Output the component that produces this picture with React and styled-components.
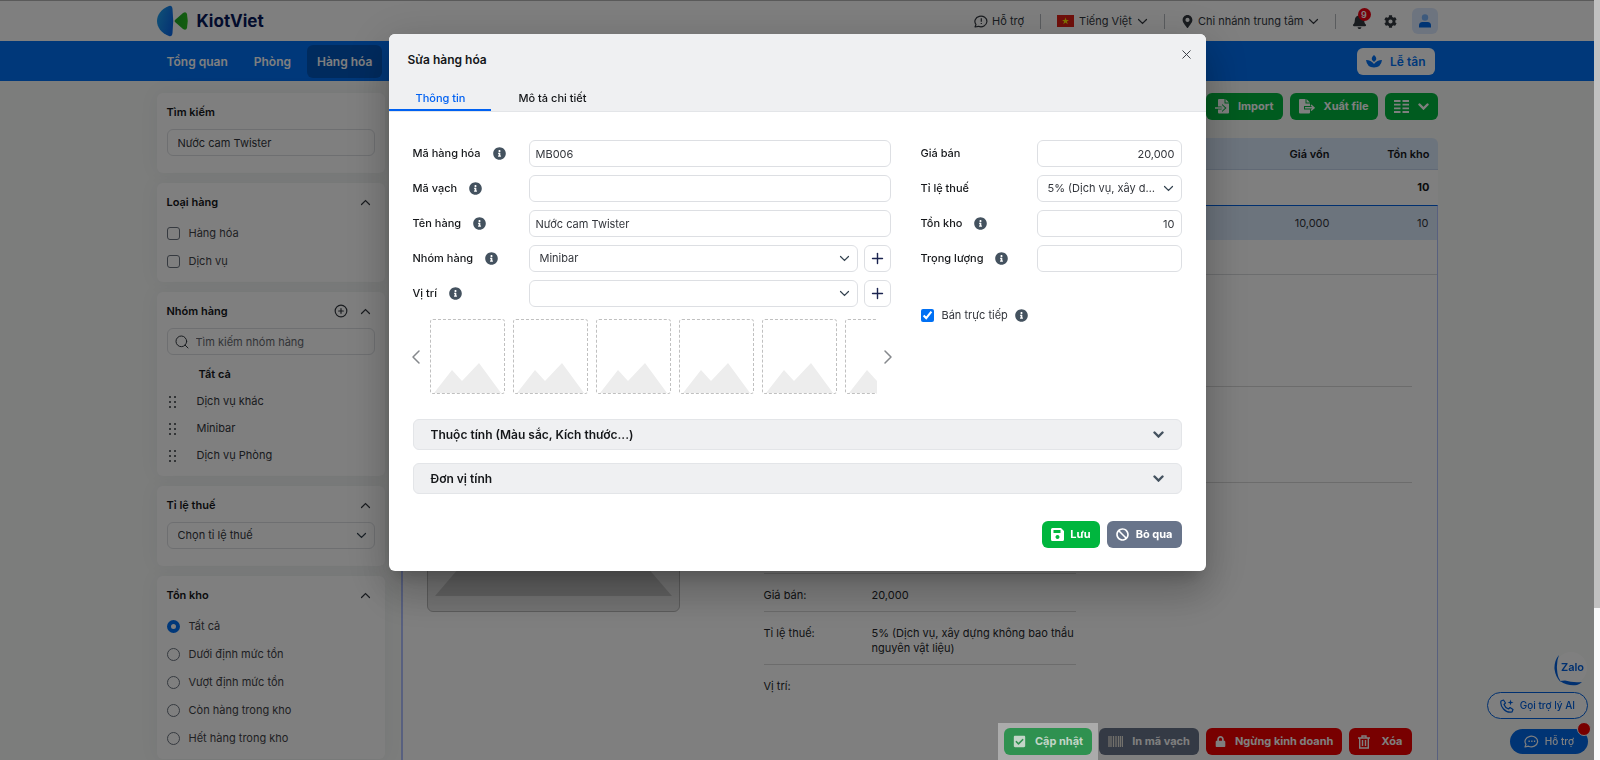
import React from "react";
import styled, { createGlobalStyle, css } from "styled-components";
import {
  FaInfoCircle,
  FaBell,
  FaCog,
  FaMapMarkerAlt,
  FaLock,
  FaBan,
  FaCheckSquare,
} from "react-icons/fa";
import { FiPlus, FiX, FiSearch, FiPlusCircle, FiChevronLeft, FiChevronRight } from "react-icons/fi";

const GlobalStyle = createGlobalStyle`
  * { box-sizing: border-box; }
  body {
    margin: 0;
    font-family: Inter, "Liberation Sans", sans-serif;
    font-size: 11px;
    line-height: 15px;
    color: #15171a;
    background: #f8faf8;
  }
  button, input, select { font: inherit; color: inherit; margin: 0; }
  button { cursor: pointer; }
  a { color: inherit; text-decoration: none; }
  h1, h2, h3, p, ul, dl, dd { margin: 0; padding: 0; font-size: inherit; }
`;

/* ---------- page frame ---------- */

const Page = styled.div`
  height: 100vh;
  overflow: hidden;
  padding-right: 6px;
  display: flex;
  flex-direction: column;
`;

const Container = styled.div`
  width: 100%;
  max-width: 1281px;
  margin: 0 auto;
  display: flex;
  align-items: center;
`;

const TopBar = styled.header`
  border-top: 1px solid #b4b4b4;
  background: #fff;
  height: 41px;
  display: flex;
`;

const Brand = styled.a`
  display: flex;
  align-items: center;
  gap: 8px;
  font-size: 17px;
  line-height: 24px;
  font-weight: 700;
  color: #06195a;
  margin-right: auto;
`;

const TopLink = styled.button`
  display: flex;
  align-items: center;
  gap: ${(p) => p.$gap || 5}px;
  border: 0;
  background: none;
  padding: 0;
  color: #33383f;
`;

const Divider = styled.span`
  width: 1px;
  height: 15px;
  background: #b4b8bd;
  margin: 0 16px;
`;

const BellButton = styled.button`
  position: relative;
  border: 0;
  background: none;
  padding: 0;
  display: flex;
  color: #33383f;
  margin-right: 17px;
`;

const Badge = styled.span`
  position: absolute;
  left: 6px;
  top: -6px;
  width: 13px;
  height: 13px;
  border-radius: 50%;
  background: #f00010;
  color: #fff;
  font-size: 9px;
  line-height: 13px;
  font-weight: 600;
`;

const IconButton = styled.button`
  border: 0;
  background: none;
  padding: 0;
  display: flex;
  color: #33383f;
`;

const Avatar = styled.button`
  margin-left: 15px;
  width: 26px;
  height: 26px;
  border: 0;
  border-radius: 6px;
  background: #dbe8ff;
  display: flex;
  align-items: center;
  justify-content: center;
  padding: 0;
`;

const NavBar = styled.nav`
  background: #0070f4;
  height: 40px;
  display: flex;
`;

const NavLink = styled.a`
  padding: 0 10px;
  height: 33px;
  line-height: 33px;
  margin-right: 6px;
  border-radius: 6px;
  font-size: 12px;
  font-weight: 600;
  color: #fff;
  background: ${(p) => (p.$active ? "#0056bd" : "none")};
`;

const Reception = styled.button`
  margin: 0 3px 0 auto;
  height: 27px;
  padding: 0 9px;
  border: 0;
  border-radius: 6px;
  background: #fff;
  color: #0070f4;
  font-size: 12px;
  font-weight: 600;
  display: flex;
  align-items: center;
  gap: 8px;
`;

const Body = styled.div`
  flex: 1;
  min-height: 0;
  width: 100%;
  max-width: 1281px;
  margin: 0 auto;
  padding-top: 12px;
  display: flex;
  gap: 16px;
`;

/* ---------- sidebar ---------- */

const Sidebar = styled.aside`
  width: 228px;
  flex: none;
  display: flex;
  flex-direction: column;
  gap: 10px;
`;

const Panel = styled.section`
  background: #fff;
  border-radius: 6px;
  box-shadow: 0 0 20px rgba(20, 50, 90, 0.06);
  padding: 10px 10px ${(p) => p.$bottom || 17}px;
  display: flex;
  flex-direction: column;
`;

const PanelHead = styled.div`
  display: flex;
  align-items: center;
  gap: 12px;
  height: 18px;
  margin-bottom: 8px;
  padding-right: 4px;
`;

const PanelTitle = styled.h2`
  flex: 1;
  font-weight: 600;
`;

const fieldCss = css`
  width: 100%;
  height: 27px;
  border: 1px solid #dddfe3;
  border-radius: 6px;
  background: #fff;
  outline: 0;
  color: #33363c;
`;

const Input = styled.input`
  ${fieldCss}
  padding: 0 ${(p) => p.$pad || 6}px;
  text-align: ${(p) => p.$align || "left"};
`;

const SearchBox = styled.div`
  position: relative;
  display: flex;
  align-items: center;
  svg { position: absolute; left: 7px; color: #33383f; }
  input { padding-left: 28px; }
  input::placeholder { color: #666a70; opacity: 1; }
`;

const SelectWrap = styled.div`
  position: relative;
  flex: 1;
  min-width: 0;
  display: flex;
  align-items: center;
  svg { position: absolute; right: 8px; pointer-events: none; color: #33424f; }
`;

const SelectField = styled.select`
  ${fieldCss}
  appearance: none;
  padding: 0 20px 0 10px;
  overflow: hidden;
  text-overflow: ellipsis;
  white-space: nowrap;
`;

const OptionRow = styled.label`
  display: flex;
  align-items: center;
  gap: 9px;
  height: 28px;
  color: #3f4247;
`;

const Check = styled.input`
  appearance: none;
  margin: 0;
  width: 13px;
  height: 13px;
  border: 1px solid #6c7480;
  border-radius: ${(p) => (p.type === "radio" ? "50%" : "3px")};
  background: #fff;
  &[type="radio"]:checked { border: 4px solid #0070f4; }
`;

const GroupRow = styled.li`
  display: flex;
  align-items: center;
  gap: 21px;
  height: 27px;
  padding-left: 2px;
  list-style: none;
  color: #33363c;
`;

const GroupAll = styled.p`
  padding: 12px 0 6px 32px;
  font-weight: 600;
`;

/* ---------- main ---------- */

const Main = styled.main`
  flex: 1;
  min-width: 0;
  display: flex;
  flex-direction: column;
`;

const Toolbar = styled.div`
  display: flex;
  justify-content: flex-end;
  gap: 7px;
  margin-bottom: 18px;
`;

const Button = styled.button`
  height: 27px;
  border: 0;
  border-radius: 6px;
  padding: 0 9px;
  display: flex;
  align-items: center;
  gap: ${(p) => p.$gap || 9}px;
  font-weight: 700;
  font-size: 11px;
  white-space: nowrap;
  color: ${(p) => p.$ink || "#fff"};
  background: ${(p) => p.$bg || "#00b63e"};
`;

const Table = styled.table`
  width: 100%;
  border-collapse: separate;
  border-spacing: 0;
  th, td { padding: 0 8px; text-align: right; }
  th { height: 32px; padding-top: 1px; background: #d9e8fb; font-weight: 600; border-bottom: 1px solid #c2d3ea; }
  th:first-child { border-top-left-radius: 6px; }
  th:last-child { border-top-right-radius: 6px; width: 100px; }
`;

const TotalRow = styled.tr`
  td { height: 35px; background: #fff; font-weight: 700; }
`;

const ItemRow = styled.tr`
  td { height: 35px; background: #d9e8fb; border-top: 1px solid #0061e0; color: #33363c; }
  td:first-child { border-left: 2px solid #b0c0ff; }
  td:last-child { border-right: 1px solid #b0c0ff; }
`;

const Detail = styled.section`
  flex: 1;
  min-height: 0;
  background: #fff;
  border-left: 2px solid #b0c0ff;
  border-right: 1px solid #b0c0ff;
  display: flex;
  flex-direction: column;
`;

const DetailTabs = styled.div`
  height: 35px;
  flex: none;
  border-bottom: 1px solid #d8dadd;
`;

const DetailBody = styled.div`
  flex: 1;
  min-height: 0;
  padding: 83px 25px 0 24px;
  display: grid;
  grid-template-columns: 253px 312px 1fr;
  column-gap: 84px;
  align-items: start;
`;

const Thumb = styled.div`
  height: 254px;
  border: 1px solid #b9b9b9;
  border-radius: 6px;
  background: #e8e8e8;
  padding: 0 7px 15px;
  display: flex;
  align-items: flex-end;
  svg { width: 100%; height: 100px; }
`;

const Facts = styled.dl`
  margin-top: 215px;
  border-top: 1px solid #d8d8d8;
  color: #24262a;
`;

const Fact = styled.div`
  display: flex;
  padding: 14px 0 8px;
  border-bottom: ${(p) => (p.$last ? "0" : "1px solid #d8d8d8")};
  dt { width: 108px; flex: none; }
`;

const Notes = styled.div`
  margin: 28px 0 0 -84px;
  border-top: 1px solid #d8d8d8;
  border-bottom: 1px solid #d8d8d8;
  height: 97px;
`;

const Actions = styled.div`
  flex: none;
  padding-right: 25px;
  display: flex;
  justify-content: flex-end;
  align-items: flex-start;
  gap: 7px;
  > button { margin-top: 5px; }
`;

const Spotlight = styled.div`
  position: relative;
  z-index: 20;
  padding: 5px 6px;
  margin-right: -6px;
  background: #ababab;
`;

/* ---------- floating help ---------- */

const Floating = styled.div`
  position: fixed;
  right: 12px;
  bottom: 6px;
  display: flex;
  flex-direction: column;
  align-items: flex-end;
`;

const Zalo = styled.a`
  width: 34px;
  height: 34px;
  margin-bottom: 6px;
`;

const Pill = styled.button`
  position: relative;
  height: ${(p) => (p.$solid ? 25 : 27)}px;
  border-radius: 14px;
  border: ${(p) => (p.$solid ? "0" : "1px solid #0061e0")};
  background: ${(p) => (p.$solid ? "#0068e8" : "#fff")};
  color: ${(p) => (p.$solid ? "#fff" : "#0061e0")};
  padding: 0 ${(p) => (p.$solid ? 14 : 12)}px;
  margin-top: ${(p) => (p.$solid ? 10 : 0)}px;
  display: flex;
  align-items: center;
  gap: 6px;
  font-size: 10px;
  font-weight: 500;
`;

const Dot = styled.span`
  position: absolute;
  right: -3px;
  top: -7px;
  width: 14px;
  height: 14px;
  border-radius: 50%;
  background: #f00000;
  border: 1px solid #fff;
`;

/* ---------- modal ---------- */

const Overlay = styled.div`
  position: fixed;
  inset: 0 6px 0 0;
  z-index: 10;
  background: rgba(0, 0, 0, 0.5);
  display: flex;
  justify-content: center;
  align-items: flex-start;
  padding-top: 34px;
`;

const ScrollTrack = styled.div`
  position: fixed;
  z-index: 11;
  top: 0;
  right: 0;
  bottom: 0;
  width: 6px;
  background: #f8f9fa;
`;

const ScrollThumb = styled.div`
  height: 80%;
  background: #c1c1c1;
`;

const Dialog = styled.section`
  width: 817px;
  max-width: 100%;
  background: #fff;
  border-radius: 6px;
  overflow: hidden;
  box-shadow: 0 9px 46px 8px rgba(0, 0, 0, 0.12), 0 24px 38px 3px rgba(0, 0, 0, 0.14), 0 11px 15px -7px rgba(0, 0, 0, 0.2);
`;

const DialogHead = styled.header`
  background: #eff0f2;
  border-bottom: 1px solid #e3e5e8;
`;

const TitleRow = styled.div`
  display: flex;
  justify-content: space-between;
  padding: 13px 12px 0 19px;
  height: 50px;
`;

const Title = styled.h1`
  font-size: 12px;
  line-height: 26px;
  font-weight: 600;
`;

const CloseButton = styled.button`
  border: 0;
  background: none;
  padding: 0;
  height: 15px;
  color: #33383f;
  display: flex;
`;

const Tabs = styled.div`
  display: flex;
`;

const Tab = styled.button`
  height: 27px;
  padding: 4px 26px 0 27px;
  border: 0;
  border-bottom: 2px solid ${(p) => (p.$active ? "#0061f2" : "transparent")};
  background: none;
  color: ${(p) => (p.$active ? "#0061f2" : "#15171a")};
  font-size: 11px;
  font-weight: 500;
`;

const Form = styled.form`
  padding: 28px 24px 23px;
`;

const Columns = styled.div`
  display: grid;
  grid-template-columns: minmax(0, 1fr) 261px;
  column-gap: 30px;
`;

const Fields = styled.div`
  min-width: 0;
  display: flex;
  flex-direction: column;
  gap: 8px;
`;

const FieldRow = styled.div`
  display: grid;
  grid-template-columns: 116px minmax(0, 1fr);
  align-items: center;
`;

const FieldLabel = styled.div`
  display: flex;
  align-items: center;
  gap: 12px;
  padding-bottom: 1px;
  font-weight: 500;
  svg { color: #44525f; }
`;

const Inline = styled.div`
  display: flex;
  gap: 6px;
`;

const AddButton = styled.button`
  width: 27px;
  height: 27px;
  flex: none;
  border: 1px solid #dddfe3;
  border-radius: 6px;
  background: #fff;
  color: #1b2450;
  padding: 0;
  display: flex;
  align-items: center;
  justify-content: center;
`;

const Gallery = styled.div`
  display: flex;
  align-items: center;
  margin-top: 4px;
`;

const Arrow = styled.button`
  border: 0;
  background: none;
  padding: 0;
  flex: none;
  width: ${(p) => (p.$end ? 14 : 17)}px;
  display: flex;
  justify-content: ${(p) => (p.$end ? "flex-end" : "flex-start")};
  color: #85888c;
  svg { margin: 0 -9px; flex: none; }
`;

const Strip = styled.div`
  flex: 1;
  min-width: 0;
  overflow: hidden;
  display: flex;
  gap: 8px;
`;

const Slot = styled.div`
  width: 75px;
  height: 75px;
  flex: none;
  border: 1px dashed #c0c0c0;
  border-radius: 3px;
  display: flex;
  align-items: flex-end;
  justify-content: center;
`;

const DirectSale = styled.div`
  display: flex;
  align-items: center;
  gap: 7px;
  margin-top: 22px;
  height: 27px;
  svg { color: #44525f; }
  label { display: flex; align-items: center; gap: 8px; color: #33363c; }
`;

const Tick = styled.input`
  margin: 0;
  width: 13px;
  height: 13px;
  accent-color: #0070f4;
`;

const Accordion = styled.button`
  width: 100%;
  height: 31px;
  margin-top: ${(p) => (p.$first ? 25 : 13)}px;
  padding: 0 17px;
  border: 1px solid #e3e5e8;
  border-radius: 6px;
  background: #eff0f2;
  display: flex;
  align-items: center;
  justify-content: space-between;
  font-size: 12px;
  font-weight: 600;
  svg { color: #44525f; }
`;

const Footer = styled.footer`
  display: flex;
  justify-content: flex-end;
  gap: 7px;
  margin-top: 27px;
`;

/* ---------- drawings ---------- */

const Chevron = ({ up, bold }) => (
  <svg width="11" height="7" viewBox="0 0 11 7" fill="none" stroke="currentColor" strokeWidth={bold ? 2.4 : 1.2}>
    <path d={up ? "M1.500 5.500 L5.500 1.500 L9.500 5.500" : "M1.500 1.500 L5.500 5.500 L9.500 1.500"} strokeLinecap="round" />
  </svg>
);

const LogoMark = () => (
  <svg width="32" height="32" viewBox="0 0 32 32">
    <defs>
      <linearGradient id="kvBlue" x1="0" x2="1" y1="0" y2="0.5">
        <stop offset="0" stopColor="#1fa5ee" />
        <stop offset="1" stopColor="#0c6be8" />
      </linearGradient>
      <linearGradient id="kvGreen" x1="0" x2="1">
        <stop offset="0" stopColor="#1fa82a" />
        <stop offset="1" stopColor="#29bd1f" />
      </linearGradient>
    </defs>
    <path d="M12 1 Q15 0 15.500 4 Q17 16 15.500 28 Q15 32 12 31 C4 28 0 22 0 16 C0 10 4 4 12 1 Z" fill="url(#kvBlue)" />
    <path d="M18 15 L26 8 Q29 6 30 9 Q31.500 16 30 23 Q29 26 26 24 L18 17 Q17 16 18 15 Z" fill="url(#kvGreen)" />
  </svg>
);

const SpeechAlert = () => (
  <svg width="14" height="13" viewBox="0 0 14 13" fill="none" stroke="currentColor" strokeWidth="1.2">
    <path d="M1 12 L2 9.500 A6 5.300 0 1 1 4.500 11.300 Z" strokeLinejoin="round" />
    <path d="M7.300 3.200 V6.700 M7.300 7.900 V9.100" />
  </svg>
);

const Flag = () => (
  <svg width="17" height="12" viewBox="0 0 17 12">
    <rect width="17" height="12" fill="#e22016" />
    <path d="M8.500 2.500 L9.400 5 H12 L9.900 6.600 L10.700 9.200 L8.500 7.600 L6.300 9.200 L7.100 6.600 L5 5 H7.600 Z" fill="#ffe600" />
  </svg>
);

const Person = () => (
  <svg width="12" height="14" viewBox="0 0 12 14">
    <circle cx="6" cy="3.500" r="3.200" fill="#7ab4fb" />
    <path d="M0 13.500 V11.500 Q0 8 3.500 8 H8.500 Q12 8 12 11.500 V13.500 Z" fill="#0068e8" />
  </svg>
);

const Lotus = () => (
  <svg width="16" height="13" viewBox="0 0 16 13" fill="currentColor">
    <path d="M8 0 Q11 2.500 10 5 L8 7 L6 5 Q5 2.500 8 0 Z" />
    <path d="M0 5 Q5 5 8 9 Q11 5 16 5 Q15 12.500 8 12.500 Q1 12.500 0 5 Z" />
  </svg>
);

const FileIn = () => (
  <svg width="14" height="15" viewBox="0 0 14 15">
    <path fillRule="evenodd" d="M4 0 H9.500 V4.500 H14 V13.500 Q14 14.500 13 14.500 H4 Q3 14.500 3 13.500 V10.500 H7 V13 L11.500 9 L7 5 V7.500 H3 V1 Q3 0 4 0 Z M10.500 0 L14 3.500 H10.500 Z" fill="currentColor" />
    <path d="M0 9 H8.500 M6.500 6.500 L9 9 L6.500 11.500" stroke="currentColor" strokeWidth="1.400" fill="none" />
  </svg>
);

const FileOut = () => (
  <svg width="16" height="15" viewBox="0 0 16 15">
    <path d="M1 0 H6.500 V4.500 H11 V7 H5 V10.500 H11 V13.500 Q11 14.500 10 14.500 H1 Q0 14.500 0 13.500 V1 Q0 0 1 0 Z M7.500 0 L11 3.500 H7.500 Z" fill="currentColor" />
    <path d="M6 8.800 H14.500 M12 6 L15 8.800 L12 11.500" stroke="currentColor" strokeWidth="1.500" fill="none" />
  </svg>
);

const ListColumns = () => (
  <svg width="15" height="13" viewBox="0 0 15 13" stroke="currentColor" strokeWidth="1.800">
    <path d="M0 1 H6.500 M8.500 1 H15 M0 4.700 H6.500 M8.500 4.700 H15 M0 8.400 H6.500 M8.500 8.400 H15 M0 12 H6.500 M8.500 12 H15" />
  </svg>
);

const Grip = () => (
  <svg width="7" height="12" viewBox="0 0 7 12" fill="#33383f">
    {[1, 6, 11].map((y) => (
      <g key={y}>
        <circle cx="1" cy={y} r="1" />
        <circle cx="6" cy={y} r="1" />
      </g>
    ))}
  </svg>
);

const Barcode = () => (
  <svg width="15" height="11" viewBox="0 0 15 11" stroke="#e6e2d8">
    <path d="M1 0 V11 M3 0 V11 M5.500 0 V11 M8 0 V11 M10.500 0 V11 M12.500 0 V11 M14.500 0 V11" strokeWidth="1.300" />
  </svg>
);

const Trash = () => (
  <svg width="12" height="14" viewBox="0 0 12 14" fill="none" stroke="currentColor" strokeWidth="1.400">
    <path d="M0 3 H12 M4 3 V1 H8 V3 M1.700 3 V13 H10.300 V3 M4.500 5 V11 M7.500 5 V11" />
  </svg>
);

const Floppy = () => (
  <svg width="13" height="13" viewBox="0 0 13 13">
    <path fillRule="evenodd" fill="#fff" d="M1.500 0 H10 L13 3 V11.500 Q13 13 11.500 13 H1.500 Q0 13 0 11.500 V1.500 Q0 0 1.500 0 Z M2.500 2 V5 H9.500 V2 Z M6.500 7 A2 2 0 1 0 6.501 7 Z" />
  </svg>
);

const Hills = () => (
  <svg width="67" height="30" viewBox="0 0 67 30">
    <path d="M0 30 L18 7 L28 18 L45 0 L67 30 Z" fill="#ededed" />
  </svg>
);

const BigHill = () => (
  <svg viewBox="0 0 236 100" preserveAspectRatio="none">
    <path d="M0 100 L85 0 H150 L236 100 Z" fill="#c4c4c4" />
  </svg>
);

const ZaloMark = () => (
  <svg width="34" height="34" viewBox="0 0 34 34">
    <circle cx="17" cy="16" r="16" fill="#fff" />
    <path d="M5 3 Q0 9 0.500 17 Q1.500 25 6.500 30 L6 28 Q3.500 25 3 17 Q2.500 9 5 3 Z M6 29 Q14 34.500 23 33 Q26 32 28 30 Q19 31 11 28.500 Z" fill="#0061e0" />
    <text x="7" y="19" fontSize="11" fontWeight="600" fontFamily="Inter, sans-serif" fill="#0061e0">Zalo</text>
  </svg>
);

const PhoneStar = () => (
  <svg width="14" height="14" viewBox="0 0 14 14" fill="none" stroke="currentColor" strokeWidth="1.200" strokeLinejoin="round">
    <path d="M1 2 L3.500 1 L5.500 4 L4 5.500 Q5 8.500 8.500 10 L10 8.500 L13 10.500 L12 13 Q7 14 3.500 10 Q0 6 1 2 Z" />
    <path d="M10.500 0.500 L11.200 2.800 L13.500 3.500 L11.200 4.200 L10.500 6.500 L9.800 4.200 L7.500 3.500 L9.800 2.800 Z" fill="currentColor" stroke="none" />
  </svg>
);

const ChatDots = () => (
  <svg width="15" height="13" viewBox="0 0 15 13" fill="none" stroke="currentColor" strokeWidth="1.200">
    <path d="M1 12 L2 9.300 A6.300 5.300 0 1 1 4.500 11.200 Z" strokeLinejoin="round" />
    <path d="M4.500 6.200 H5.800 M7.200 6.200 H8.500 M9.900 6.200 H11.200" strokeWidth="1.400" />
  </svg>
);

/* ---------- composed parts ---------- */

const Field = ({ id, label, info, children }) => (
  <FieldRow>
    <FieldLabel>
      <label htmlFor={id}>{label}</label>
      {info && <FaInfoCircle size={13} />}
    </FieldLabel>
    {children}
  </FieldRow>
);

const FilterPanel = ({ title, extra, bottom, collapsible = true, children }) => (
  <Panel $bottom={bottom}>
    <PanelHead>
      <PanelTitle>{title}</PanelTitle>
      {extra}
      {collapsible && (
        <IconButton type="button" aria-label={"Thu gọn " + title}>
          <Chevron up />
        </IconButton>
      )}
    </PanelHead>
    {children}
  </Panel>
);

const stockFilters = ["Tất cả", "Dưới định mức tồn", "Vượt định mức tồn", "Còn hàng trong kho", "Hết hàng trong kho"];
const groups = ["Dịch vụ khác", "Minibar", "Dịch vụ Phòng"];
const taxText = "5% (Dịch vụ, xây dựng không bao thầu nguyên vật liệu)";

export default function App() {
  return (
    <>
      <GlobalStyle />
      <Page>
        <TopBar>
          <Container>
            <Brand href="#"><LogoMark />KiotViet</Brand>
            <TopLink type="button" $gap={4}><SpeechAlert />Hỗ trợ</TopLink>
            <Divider />
            <TopLink type="button"><Flag />Tiếng Việt<Chevron /></TopLink>
            <Divider />
            <TopLink type="button" $gap={4}><FaMapMarkerAlt size={13} />Chi nhánh trung tâm<Chevron /></TopLink>
            <Divider />
            <BellButton type="button" aria-label="Thông báo"><FaBell size={15} /><Badge>9</Badge></BellButton>
            <IconButton type="button" aria-label="Thiết lập"><FaCog size={13} /></IconButton>
            <Avatar type="button" aria-label="Tài khoản"><Person /></Avatar>
          </Container>
        </TopBar>
        <NavBar>
          <Container>
            <NavLink href="#">Tổng quan</NavLink>
            <NavLink href="#">Phòng</NavLink>
            <NavLink href="#" $active>Hàng hóa</NavLink>
            <Reception type="button"><Lotus />Lễ tân</Reception>
          </Container>
        </NavBar>
        <Body>
          <Sidebar>
            <FilterPanel title="Tìm kiếm" collapsible={false}>
              <Input $pad={10} aria-label="Tìm kiếm" defaultValue="Nước cam Twister" />
            </FilterPanel>
            <FilterPanel title="Loại hàng" bottom={7}>
              {["Hàng hóa", "Dịch vụ"].map((t) => (
                <OptionRow key={t}><Check type="checkbox" />{t}</OptionRow>
              ))}
            </FilterPanel>
            <FilterPanel
              title="Nhóm hàng"
              bottom={7}
              extra={<IconButton type="button" aria-label="Thêm nhóm hàng"><FiPlusCircle size={14} /></IconButton>}
            >
              <SearchBox>
                <FiSearch size={16} strokeWidth={1.5} />
                <Input aria-label="Tìm kiếm nhóm hàng" placeholder="Tìm kiếm nhóm hàng" />
              </SearchBox>
              <GroupAll>Tất cả</GroupAll>
              <ul>{groups.map((g) => <GroupRow key={g}><Grip />{g}</GroupRow>)}</ul>
            </FilterPanel>
            <FilterPanel title="Tỉ lệ thuế">
              <SelectWrap>
                <SelectField aria-label="Tỉ lệ thuế"><option>Chọn tỉ lệ thuế</option></SelectField>
                <Chevron />
              </SelectWrap>
            </FilterPanel>
            <FilterPanel title="Tồn kho" bottom={7}>
              {stockFilters.map((t, i) => (
                <OptionRow key={t}><Check type="radio" name="stock" defaultChecked={i === 0} />{t}</OptionRow>
              ))}
            </FilterPanel>
          </Sidebar>
          <Main>
            <Toolbar>
              <Button type="button"><FileIn />Import</Button>
              <Button type="button"><FileOut />Xuất file</Button>
              <Button type="button" aria-label="Hiển thị cột"><ListColumns /><Chevron bold /></Button>
            </Toolbar>
            <Table>
              <thead><tr><th>Giá vốn</th><th>Tồn kho</th></tr></thead>
              <tbody>
                <TotalRow><td /><td>10</td></TotalRow>
                <ItemRow><td>10,000</td><td>10</td></ItemRow>
              </tbody>
            </Table>
            <Detail>
              <DetailTabs />
              <DetailBody>
                <Thumb><BigHill /></Thumb>
                <Facts>
                  <Fact><dt>Giá bán:</dt><dd>20,000</dd></Fact>
                  <Fact><dt>Tỉ lệ thuế:</dt><dd>{taxText}</dd></Fact>
                  <Fact $last><dt>Vị trí:</dt><dd /></Fact>
                </Facts>
                <Notes />
              </DetailBody>
              <Actions>
                <Spotlight>
                  <Button type="button" $bg="#2f9150" $ink="#c3d5c8"><FaCheckSquare size={13} />Cập nhật</Button>
                </Spotlight>
                <Button type="button" $bg="#68748a"><Barcode />In mã vạch</Button>
                <Button type="button" $bg="#f00000"><FaLock size={11} />Ngừng kinh doanh</Button>
                <Button type="button" $bg="#f00000" $gap={11}><Trash />Xóa</Button>
              </Actions>
            </Detail>
          </Main>
        </Body>
      </Page>

      <Floating>
        <Zalo href="#" aria-label="Zalo"><ZaloMark /></Zalo>
        <Pill type="button"><PhoneStar />Gọi trợ lý AI</Pill>
        <Pill type="button" $solid><ChatDots />Hỗ trợ<Dot /></Pill>
      </Floating>

      <ScrollTrack><ScrollThumb /></ScrollTrack>

      <Overlay>
        <Dialog role="dialog" aria-modal="true" aria-labelledby="dialog-title">
          <DialogHead>
            <TitleRow>
              <Title id="dialog-title">Sửa hàng hóa</Title>
              <CloseButton type="button" aria-label="Đóng"><FiX size={15} strokeWidth={1.5} /></CloseButton>
            </TitleRow>
            <Tabs role="tablist">
              <Tab type="button" role="tab" aria-selected="true" $active>Thông tin</Tab>
              <Tab type="button" role="tab" aria-selected="false">Mô tả chi tiết</Tab>
            </Tabs>
          </DialogHead>
          <Form>
            <Columns>
              <Fields>
                <Field id="code" label="Mã hàng hóa" info><Input id="code" defaultValue="MB006" /></Field>
                <Field id="barcode" label="Mã vạch" info><Input id="barcode" /></Field>
                <Field id="name" label="Tên hàng" info><Input id="name" defaultValue="Nước cam Twister" /></Field>
                <Field id="group" label="Nhóm hàng" info>
                  <Inline>
                    <SelectWrap>
                      <SelectField id="group"><option>Minibar</option></SelectField>
                      <Chevron />
                    </SelectWrap>
                    <AddButton type="button" aria-label="Thêm nhóm hàng"><FiPlus size={17} /></AddButton>
                  </Inline>
                </Field>
                <Field id="place" label="Vị trí" info>
                  <Inline>
                    <SelectWrap>
                      <SelectField id="place"><option></option></SelectField>
                      <Chevron />
                    </SelectWrap>
                    <AddButton type="button" aria-label="Thêm vị trí"><FiPlus size={17} /></AddButton>
                  </Inline>
                </Field>
                <Gallery>
                  <Arrow type="button" aria-label="Ảnh trước"><FiChevronLeft size={24} strokeWidth={1.5} /></Arrow>
                  <Strip>{[1, 2, 3, 4, 5, 6].map((n) => <Slot key={n}><Hills /></Slot>)}</Strip>
                  <Arrow type="button" $end aria-label="Ảnh sau"><FiChevronRight size={24} strokeWidth={1.5} /></Arrow>
                </Gallery>
              </Fields>
              <Fields>
                <Field id="price" label="Giá bán"><Input id="price" $align="right" defaultValue="20,000" /></Field>
                <Field id="tax" label="Tỉ lệ thuế">
                  <SelectWrap>
                    <SelectField id="tax"><option>{taxText}</option></SelectField>
                    <Chevron />
                  </SelectWrap>
                </Field>
                <Field id="stock" label="Tồn kho" info><Input id="stock" $align="right" defaultValue="10" /></Field>
                <Field id="weight" label="Trọng lượng" info><Input id="weight" /></Field>
                <DirectSale>
                  <label><Tick type="checkbox" defaultChecked />Bán trực tiếp</label>
                  <FaInfoCircle size={13} />
                </DirectSale>
              </Fields>
            </Columns>
            <Accordion type="button" $first>Thuộc tính (Màu sắc, Kích thước...)<Chevron bold /></Accordion>
            <Accordion type="button">Đơn vị tính<Chevron bold /></Accordion>
            <Footer>
              <Button type="button" $gap={6}><Floppy />Lưu</Button>
              <Button type="button" $bg="#68748a" $gap={7}><FaBan size={13} />Bỏ qua</Button>
            </Footer>
          </Form>
        </Dialog>
      </Overlay>
    </>
  );
}
